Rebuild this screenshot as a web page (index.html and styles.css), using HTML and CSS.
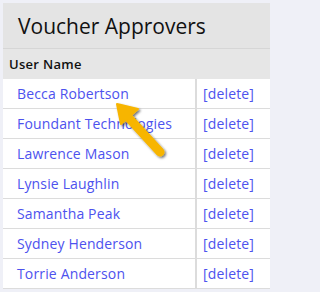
FILE: index.html
```html
<!DOCTYPE html>
<html>
<head>
<meta charset="utf-8">
<link rel="stylesheet" href="styles.css">
</head>
<body>
<div class="panel">
  <h1 class="title">Voucher Approvers</h1>
  <table class="grid">
    <thead>
      <tr><th class="hname">User Name</th><th class="hact"></th></tr>
    </thead>
    <tbody>
      <tr><td class="name"><a href="#">Becca Robertson</a></td><td class="act"><a href="#">[delete]</a></td></tr>
      <tr><td class="name"><a href="#">Foundant Technologies</a></td><td class="act"><a href="#">[delete]</a></td></tr>
      <tr><td class="name"><a href="#">Lawrence Mason</a></td><td class="act"><a href="#">[delete]</a></td></tr>
      <tr><td class="name"><a href="#">Lynsie Laughlin</a></td><td class="act"><a href="#">[delete]</a></td></tr>
      <tr><td class="name"><a href="#">Samantha Peak</a></td><td class="act"><a href="#">[delete]</a></td></tr>
      <tr><td class="name"><a href="#">Sydney Henderson</a></td><td class="act"><a href="#">[delete]</a></td></tr>
      <tr><td class="name"><a href="#">Torrie Anderson</a></td><td class="act"><a href="#">[delete]</a></td></tr>
    </tbody>
  </table>
  <svg class="pointer" width="72" height="72" viewBox="0 0 72 72">
    <defs>
      <filter id="sh" x="-30%" y="-30%" width="160%" height="160%">
        <feDropShadow dx="1.5" dy="1.5" stdDeviation="1.2" flood-color="#000" flood-opacity="0.55"/>
      </filter>
    </defs>
    <g filter="url(#sh)" fill="#f7b500" stroke="#f7b500">
      <line x1="57" y1="57" x2="24" y2="21" stroke-width="9" stroke-linecap="round"/>
      <polygon points="14,9 35,14 18,29" stroke-width="2" stroke-linejoin="round"/>
    </g>
  </svg>
</div>
</body>
</html>
```
FILE: styles.css
```css
html, body {
  margin: 0;
  padding: 0;
  background: #eff0f7;
}
body {
  font-family: "Open Sans", "Liberation Sans", sans-serif;
  width: 280px;
  height: 292px;
  overflow: hidden;
}
.panel {
  position: relative;
  margin: 3px 0 0 3px;
  width: 267px;
  background: #e4e4e4;
}
.title {
  margin: 0;
  height: 46px;
  box-sizing: border-box;
  padding: 9px 0 0 15px;
  font-size: 21px;
  font-weight: 500;
  line-height: 28px;
  color: #111;
  border-bottom: 1px solid #d6d6d6;
}
.grid {
  width: 100%;
  border-collapse: collapse;
}
.grid th {
  height: 30px;
  padding: 0;
  text-align: left;
  font-size: 13px;
  font-weight: 600;
  letter-spacing: 0.3px;
  color: #111;
  background: #e6e6e6;
}
.hname {
  padding-left: 6px !important;
}
.grid td {
  height: 29px;
  padding: 0;
  background: #fff;
  border-bottom: 1px solid #dcdcdc;
  font-size: 14px;
  letter-spacing: 0.15px;
}
.grid td.name {
  padding-left: 14px;
  width: 178px;
}
.grid td.act {
  border-left: 2px solid #dcdcdc;
  padding-left: 6px;
}
.grid a {
  color: #4d52ee;
  text-decoration: none;
}
.pointer {
  position: absolute;
  left: 100px;
  top: 92px;
}
```
